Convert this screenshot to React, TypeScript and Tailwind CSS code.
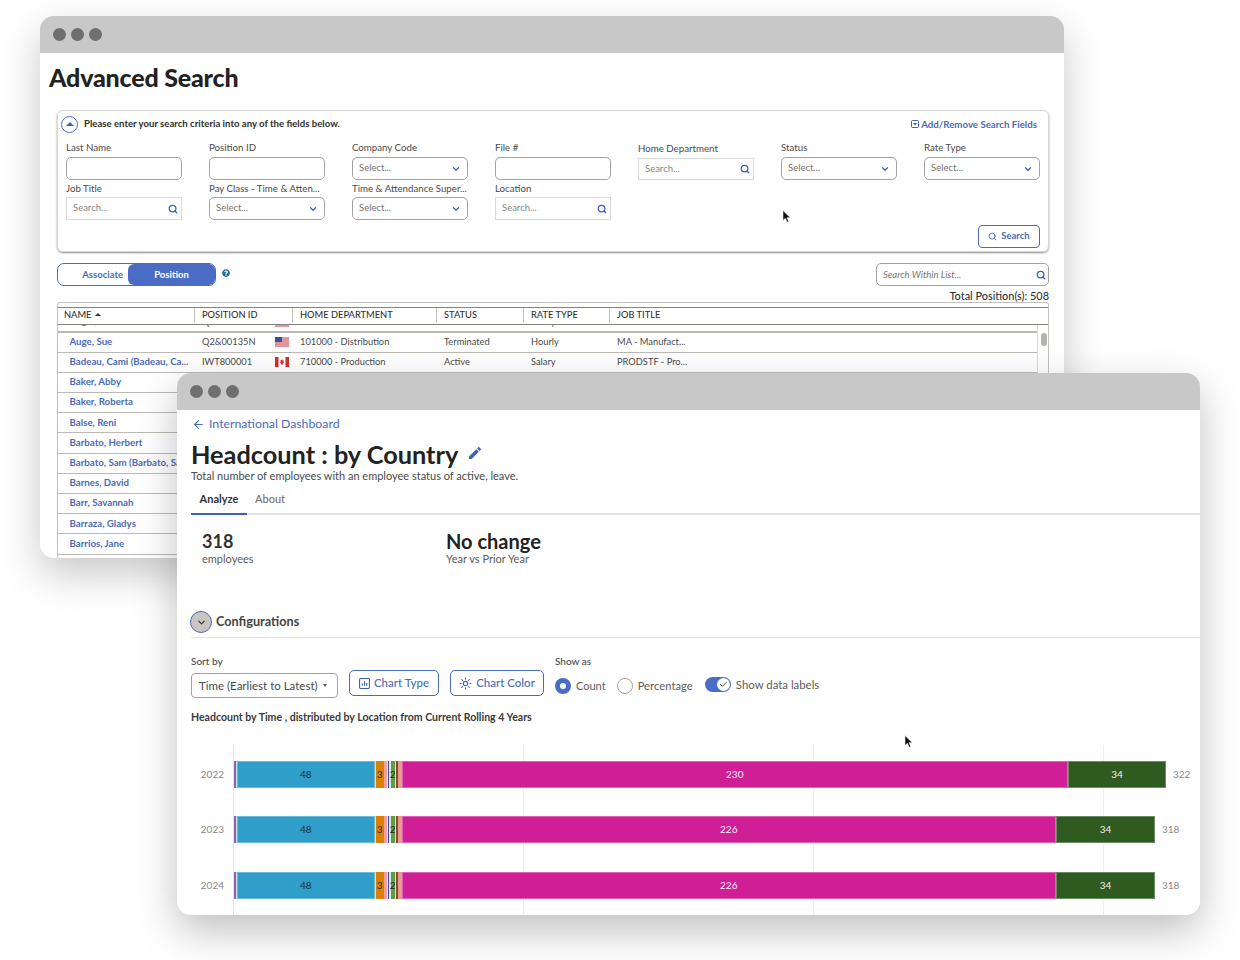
import { ArrowLeft, ChevronDown, Search, Sun, Check } from "lucide-react";
import { MdEdit } from "react-icons/md";
import { FaQuestionCircle } from "react-icons/fa";

function Dots() {
  return (
    <div className="flex h-[37px] shrink-0 items-center gap-[5.5px] bg-[#c8c8c8] pl-[13px]">
      <span className="size-[12.5px] rounded-full bg-[#6f6f6f]" />
      <span className="size-[12.5px] rounded-full bg-[#6f6f6f]" />
      <span className="size-[12.5px] rounded-full bg-[#6f6f6f]" />
    </div>
  );
}

function Label({ text, low }: { text: string; low?: boolean }) {
  return (
    <div className={`whitespace-nowrap text-[9.7px] leading-[15px] text-[#4a4a4a] ${low ? "h-[17px] pt-px" : "h-[16px]"}`}>
      {text}
    </div>
  );
}

function TextInput() {
  return <div className="h-[23px] rounded-[5px] border border-[#a5a19c] bg-white" />;
}

function SelectInput() {
  return (
    <div className="flex h-[23px] items-center justify-between rounded-[5px] border border-[#a5a19c] bg-white px-[6px] text-[9.5px] text-[#77736e]">
      <span>Select...</span>
      <ChevronDown className="size-[10px] text-[#3c62b8]" strokeWidth={3} />
    </div>
  );
}

function SearchInput({ short }: { short?: boolean }) {
  return (
    <div className={`flex items-center justify-between border border-[#dcdad7] bg-white pl-[6px] pr-[3px] text-[9.5px] text-[#8a8782] ${short ? "mt-px h-[22px]" : "h-[23px]"}`}>
      <span>Search...</span>
      <Search className="size-[10px] text-[#3c62b8]" strokeWidth={3} />
    </div>
  );
}

function Field({ label, kind }: { label: string; kind: "text" | "select" | "search" | "home" }) {
  return (
    <div className="min-w-0">
      <div className={kind === "home" ? "h-[17px]" : "-mt-px h-[18px]"}>
        <Label text={label} low />
      </div>
      {kind === "text" && <TextInput />}
      {kind === "select" && <SelectInput />}
      {kind === "search" && <SearchInput />}
      {kind === "home" && <SearchInput short />}
    </div>
  );
}

function LowField({ label, kind }: { label: string; kind: "select" | "search" }) {
  return (
    <div className="min-w-0">
      <Label text={label} />
      {kind === "select" ? <SelectInput /> : <SearchInput />}
    </div>
  );
}

function FlagUS() {
  return (
    <svg width="14" height="10" viewBox="0 0 14 10" className="shrink-0">
      <rect width="14" height="10" fill="#f3d6d6" />
      <path d="M0 1h14M0 3h14M0 5h14M0 7h14M0 9h14" stroke="#d3555f" strokeWidth="1" />
      <rect width="7" height="5" fill="#3f4f95" />
    </svg>
  );
}

function FlagCA() {
  return (
    <svg width="14" height="10" viewBox="0 0 14 10" className="shrink-0">
      <rect width="14" height="10" fill="#fff" />
      <rect width="3.5" height="10" fill="#d92b2b" />
      <rect x="10.5" width="3.5" height="10" fill="#d92b2b" />
      <path d="M7 2l.8 1.4.9-.3-.3 1.8.8.2-1.4 1.4.1.9H6.1l.1-.9L4.8 5.1l.8-.2-.3-1.8.9.3z" fill="#d92b2b" />
    </svg>
  );
}

const names = [
  "Baker, Abby",
  "Baker, Roberta",
  "Balse, Reni",
  "Barbato, Herbert",
  "Barbato, Sam (Barbato, Sa...",
  "Barnes, David",
  "Barr, Savannah",
  "Barraza, Gladys",
  "Barrios, Jane",
];

const columns = [
  { title: "POSITION ID", cls: "w-[98px]" },
  { title: "HOME DEPARTMENT", cls: "w-[144px]" },
  { title: "STATUS", cls: "w-[87px]" },
  { title: "RATE TYPE", cls: "w-[86px]" },
];

function DataRow(props: { name: string; id: string; flag: React.ReactNode; dept: string; status: string; rate: string; job: string }) {
  return (
    <div className="flex h-[20.2px] items-center border-b border-[#bdb9b4] text-[9.3px] text-[#4a4a4a]">
      <div className="w-[136px] whitespace-nowrap pb-[2px] pl-[11.5px] text-[9.7px] font-bold text-[#4a6cb8]">{props.name}</div>
      <div className="flex w-[98px] items-center pl-[8px]">
        <span className="w-[73px]">{props.id}</span>
        {props.flag}
      </div>
      <div className="w-[144px] pl-[8px]">{props.dept}</div>
      <div className="w-[87px] pl-[8px]">{props.status}</div>
      <div className="w-[86px] pl-[8px]">{props.rate}</div>
      <div className="pl-[8px]">{props.job}</div>
    </div>
  );
}

function AdvancedSearch() {
  return (
    <div className="absolute left-[40px] top-[16px] flex h-[542px] w-[1024px] flex-col overflow-hidden rounded-[14px] bg-white shadow-[0_16px_40px_rgba(0,0,0,0.22)]">
      <Dots />
      <h1 className="pl-[9px] pt-[8px] text-[25px] font-black leading-[32px] tracking-[-0.2px] text-[#222]">
        Advanced Search
      </h1>

      <section className="ml-[17px] mt-[17px] h-[142px] w-[992px] rounded-[6px] border border-[#d8d6d3] shadow-[0_1px_2px_rgba(0,0,0,0.45)]">
        <div className="flex items-center justify-between pl-[3px] pr-[11px] pt-[5px]">
          <div className="flex items-center gap-[6px]">
            <span className="flex size-[17px] items-center justify-center rounded-full border border-[#4a6cb8]">
              <span className="mb-px size-0 border-x-[4px] border-b-[4px] border-x-transparent border-b-[#3c62b8]" />
            </span>
            <span className="text-[9.6px] font-bold text-[#2e2e2e]">
              Please enter your search criteria into any of the fields below.
            </span>
          </div>
          <div className="flex items-center gap-[2px] text-[9.7px] font-bold text-[#4a6cb8]">
            <svg width="8" height="8" viewBox="0 0 8 8">
              <rect x="0.5" y="0.5" width="7" height="7" rx="1" fill="none" stroke="#3c62b8" />
              <path d="M2 3h4L4 5.5z" fill="#3c62b8" />
            </svg>
            Add/Remove Search Fields
          </div>
        </div>

        <div className="mt-[7px] grid grid-cols-7 gap-x-[27px] px-[8px]">
          <Field label="Last Name" kind="text" />
          <Field label="Position ID" kind="text" />
          <Field label="Company Code" kind="select" />
          <Field label="File #" kind="text" />
          <Field label="Home Department" kind="home" />
          <Field label="Status" kind="select" />
          <Field label="Rate Type" kind="select" />
          <div className="pt-px"><LowField label="Job Title" kind="search" /></div>
          <div className="pt-px"><LowField label="Pay Class - Time & Atten..." kind="select" /></div>
          <div className="pt-px"><LowField label="Time & Attendance Super..." kind="select" /></div>
          <div className="pt-px"><LowField label="Location" kind="search" /></div>
        </div>

        <div className="mt-[5px] flex justify-end pr-[8px]">
          <button className="flex h-[23px] w-[62px] items-center justify-center gap-[4px] rounded-[4px] border border-[#4a6cb8] text-[9.5px] font-bold text-[#4a6cb8]">
            <Search className="size-[9px]" strokeWidth={2.5} />
            Search
          </button>
        </div>
      </section>

      <div className="ml-[17px] mt-[11px] flex w-[992px] justify-between">
        <div className="flex items-start gap-[6px]">
          <div className="flex h-[23px] w-[159px] rounded-[7px] border border-[#4a6cb8] text-[9.5px] font-bold">
            <span className="flex w-[70px] items-center justify-end pr-[5px] pt-px text-[#4a6cb8]">Associate</span>
            <span className="flex flex-1 items-center justify-center rounded-[6px] bg-[#4a6cc4] pt-px text-white">Position</span>
          </div>
          <FaQuestionCircle className="mt-[6px] size-[8px] text-[#1f6f8f]" />
        </div>
        <div className="flex h-[23px] w-[173px] items-center justify-between rounded-[5px] border border-[#a5a19c] pl-[6px] pr-[2px] pt-px text-[9.5px] italic text-[#77736e]">
          <span>Search Within List...</span>
          <Search className="size-[10px] text-[#3c62b8]" strokeWidth={3} />
        </div>
      </div>
      <div className="mt-[4px] h-[12px] w-[1009px] text-right text-[10.9px] font-medium leading-[12px] text-[#333]">
        Total Position(s): 508
      </div>

      <div className="ml-[17px] w-[992px] flex-1 overflow-hidden rounded-t-[3px] border-x border-t border-[#c4c1bd] pt-[3.5px]">
        <div className="flex h-[18.5px] items-center border-y border-[#85827e] pb-px text-[9.3px] font-medium text-[#333]">
          <div className="flex h-full w-[137px] items-center gap-[3px] border-r border-[#c4c1bd] pl-[6px]">
            NAME
            <span className="mb-px size-0 border-x-[3px] border-b-[3px] border-x-transparent border-b-[#333]" />
          </div>
          {columns.map((c) => (
            <div key={c.title} className={`flex h-full items-center border-r border-[#c4c1bd] pl-[7px] ${c.cls}`}>
              {c.title}
            </div>
          ))}
          <div className="pl-[7px]">JOB TITLE</div>
        </div>

        <div className="flex h-full">
          <div className="flex-1">
            <div className="h-[7.5px] overflow-hidden border-b border-[#bdb9b4]">
              <div className="-mt-[13px]">
                <DataRow name="Augar, Alison" id="Q2&00157H" flag={<FlagUS />} dept="701000 - Sales" status="Terminated" rate="Salary" job="DM - District M..." />
              </div>
            </div>
            <DataRow name="Auge, Sue" id="Q2&00135N" flag={<FlagUS />} dept="101000 - Distribution" status="Terminated" rate="Hourly" job="MA - Manufact..." />
            <DataRow name="Badeau, Cami (Badeau, Ca..." id="IWT800001" flag={<FlagCA />} dept="710000 - Production" status="Active" rate="Salary" job="PRODSTF - Pro..." />
            {names.map((n) => (
              <DataRow key={n} name={n} id="" flag={null} dept="" status="" rate="" job="" />
            ))}
          </div>
          <div className="w-[11px] border-l border-[#dcdad7] pl-[2.5px] pt-[8px]">
            <div className="h-[13px] w-[6px] rounded-full bg-[#b5b3b0]" />
          </div>
        </div>
      </div>
    </div>
  );
}

type Seg = { w: number; c: string; label?: string; edge?: boolean; dark?: boolean };

function segments(magenta: number, green: number, mid: string): Seg[] {
  return [
    { w: 2.5, c: "bg-[#8b63b5]" },
    { w: 1, c: "bg-[#c8dce6]" },
    { w: 137.5, c: "bg-[#2f9fc9]", label: "48", edge: true },
    { w: 1.5, c: "bg-[#e8dcc8]" },
    { w: 7.5, c: "bg-[#dd7f00]", label: "3" },
    { w: 3, c: "bg-[#f0a098]" },
    { w: 1, c: "bg-[#e4e4e4]" },
    { w: 1.5, c: "bg-[#3a4f9a]" },
    { w: 1.5, c: "bg-[#dfe6dc]" },
    { w: 4.5, c: "bg-[#5a9e46]", label: "2" },
    { w: 0.5, c: "bg-[#dfe6dc]" },
    { w: 2.5, c: "bg-[#8a4a2a]" },
    { w: 3.5, c: "bg-[#e89a90]" },
    { w: magenta, c: "bg-[#d01f96]", label: mid, edge: true, dark: true },
    { w: green, c: "bg-[#2f5a20]", label: "34", edge: true, dark: true },
  ];
}

const years = [
  { year: "2022", total: "322", segs: segments(666.5, 98, "230"), top: "" },
  { year: "2023", total: "318", segs: segments(654.5, 99, "226"), top: "" },
  { year: "2024", total: "318", segs: segments(654.5, 99, "226"), top: "mt-px" },
];

function Chart() {
  return (
    <div className="relative mt-[21px] h-[170px] pt-[16px]">
      <span className="absolute bottom-0 left-[42px] top-0 w-px bg-[#e6e4e2]" />
      <span className="absolute bottom-0 left-[332px] top-0 w-px bg-[#efeeec]" />
      <span className="absolute bottom-0 left-[622px] top-0 w-px bg-[#efeeec]" />
      <span className="absolute bottom-0 left-[912px] top-0 w-px bg-[#efeeec]" />
      <div className="relative flex flex-col gap-[28px]">
        {years.map((y) => (
          <div key={y.year} className={`flex h-[27px] items-center ${y.top}`}>
            <div className="w-[33px] text-right text-[10px] text-[#8a8782]">{y.year}</div>
            <div className="ml-[9.5px] flex h-full">
              {y.segs.map((s, i) => (
                <div
                  key={i}
                  style={{ width: s.w }}
                  className={`flex h-full items-center justify-center overflow-visible whitespace-nowrap text-[10px] ${s.c} ${s.edge ? "border border-white/30" : ""} ${s.dark ? "text-[#f5f0f0]" : "text-[#12303f]"}`}
                >
                  {s.label}
                </div>
              ))}
            </div>
            <div className="ml-[7px] text-[10px] text-[#8a8782]">{y.total}</div>
          </div>
        ))}
      </div>
    </div>
  );
}

function Headcount() {
  return (
    <div className="absolute left-[177px] top-[373px] flex h-[542px] w-[1023px] flex-col overflow-hidden rounded-[14px] bg-white shadow-[0_16px_40px_rgba(0,0,0,0.25)]">
      <Dots />
      <div className="pl-[14px] pt-[7px]">
        <div className="flex h-[14px] items-center gap-[4px] text-[12.3px] leading-[14px] text-[#4a6cb8]">
          <ArrowLeft className="ml-[1px] size-[13px]" strokeWidth={2} />
          International Dashboard
        </div>
        <div className="mt-[7px] flex items-center gap-[9px]">
          <h2 className="text-[25.3px] font-bold leading-[32px] text-[#222]">Headcount : by Country</h2>
          <MdEdit className="mb-[3px] size-[16px] text-[#3c62b8]" />
        </div>
        <p className="-mt-[1px] h-[14px] text-[11px] leading-[14px] text-[#4a4a4a]">
          Total number of employees with an employee status of active, leave.
        </p>
        <div className="mt-[6px] flex h-[26px] border-b-2 border-[#e4e2df]">
          <div className="-mb-[2px] flex w-[56px] justify-center border-b-2 border-[#3c62b8] pt-[3px] text-[11px] font-bold leading-[14px] text-[#333]">
            Analyze
          </div>
          <div className="ml-[8px] pt-[3px] text-[11px] font-medium leading-[14px] text-[#77736e]">About</div>
        </div>

        <div className="mt-[15px] flex pl-[11px]">
          <div className="w-[244px]">
            <div className="text-[18px] font-bold leading-[22px] text-[#333]">318</div>
            <div className="text-[11px] leading-[14px] text-[#5e5b57]">employees</div>
          </div>
          <div>
            <div className="text-[20px] font-bold leading-[22px] text-[#222]">No change</div>
            <div className="text-[11px] leading-[14px] text-[#5e5b57]">Year vs Prior Year</div>
          </div>
        </div>

        <div className="-ml-[1px] mt-[45px] flex items-center gap-[4px]">
          <span className="flex size-[22px] items-center justify-center rounded-full border border-[#4a6cb8] bg-[#c9c6c2]">
            <ChevronDown className="size-[11px] text-[#333]" strokeWidth={2.5} />
          </span>
          <span className="text-[12.7px] font-bold text-[#444]">Configurations</span>
        </div>
        <div className="mt-[4px] h-px bg-[#e4e2df]" />

        <div className="mt-[16px] flex items-start">
          <div>
            <div className="h-[14px] text-[10px] font-medium leading-[14px] text-[#4a4a4a]">Sort by</div>
            <div className="mt-[5px] flex h-[25px] w-[147px] items-center justify-between rounded-[4px] border border-[#a5a19c] pl-[7px] pr-[10px] text-[11.5px] text-[#4a4a4a]">
              Time (Earliest to Latest)
              <span className="size-0 border-x-[2.5px] border-t-[3px] border-x-transparent border-t-[#4a5a80]" />
            </div>
          </div>
          <button className="ml-[11px] mt-[16px] flex h-[26px] w-[90px] items-center justify-center gap-[4px] rounded-[5px] border border-[#4a6cb8] text-[11.5px] font-medium text-[#4a6cb8]">
            <svg width="11" height="11" viewBox="0 0 10 10" fill="none" stroke="#3c62b8">
              <rect x="0.5" y="0.5" width="9" height="9" rx="1" />
              <path d="M3 7V5M5 7V3M7 7V4.5" />
            </svg>
            Chart Type
          </button>
          <button className="ml-[11px] mt-[16px] flex h-[26px] w-[94px] items-center justify-center gap-[4px] rounded-[5px] border border-[#4a6cb8] text-[11.5px] font-medium text-[#4a6cb8]">
            <Sun className="size-[13px] text-[#3c62b8]" strokeWidth={2} />
            Chart Color
          </button>
          <div className="ml-[11px]">
            <div className="h-[14px] text-[10px] font-medium leading-[14px] text-[#4a4a4a]">Show as</div>
            <div className="mt-[8px] flex h-[20px] items-center text-[11px] text-[#5e5b57]">
              <span className="flex size-[16px] items-center justify-center rounded-full bg-[#4a6cc4]">
                <span className="size-[6px] rounded-full bg-white" />
              </span>
              <span className="ml-[5px]">Count</span>
              <span className="ml-[11px] size-[16px] rounded-full border border-[#a5a19c]" />
              <span className="ml-[5px] text-[11.2px] tracking-[0.05px]">Percentage</span>
              <span className="-mt-[3px] ml-[12px] flex h-[15px] w-[26px] items-center justify-end rounded-full bg-[#4a6cc4] pr-px">
                <span className="flex size-[13px] items-center justify-center rounded-full bg-white">
                  <Check className="size-[9px] text-[#333]" strokeWidth={2.5} />
                </span>
              </span>
              <span className="-mt-[3px] ml-[5px] text-[11.4px]">Show data labels</span>
            </div>
          </div>
        </div>

        <div className="mt-[12px] h-[14px] text-[10.55px] font-bold leading-[14px] text-[#3a3a3a]">
          Headcount by Time , distributed by Location from Current Rolling 4 Years
        </div>
        <Chart />
      </div>
    </div>
  );
}

function Cursor({ pos }: { pos: string }) {
  return (
    <svg width="9" height="13" viewBox="0 0 9 13" className={`absolute ${pos}`}>
      <path d="M1 0.5v10l2.4-2.2 1.7 3.9 1.6-.7-1.7-3.8H8.3z" fill="#111" stroke="#fff" strokeWidth="0.5" />
    </svg>
  );
}

export default function App() {
  return (
    <div className="relative h-[960px] w-[1240px] overflow-hidden bg-white [font-family:Lato,'Liberation_Sans',sans-serif]">
      <AdvancedSearch />
      <Cursor pos="left-[782px] top-[210px]" />
      <Headcount />
      <Cursor pos="left-[904px] top-[735px]" />
    </div>
  );
}
